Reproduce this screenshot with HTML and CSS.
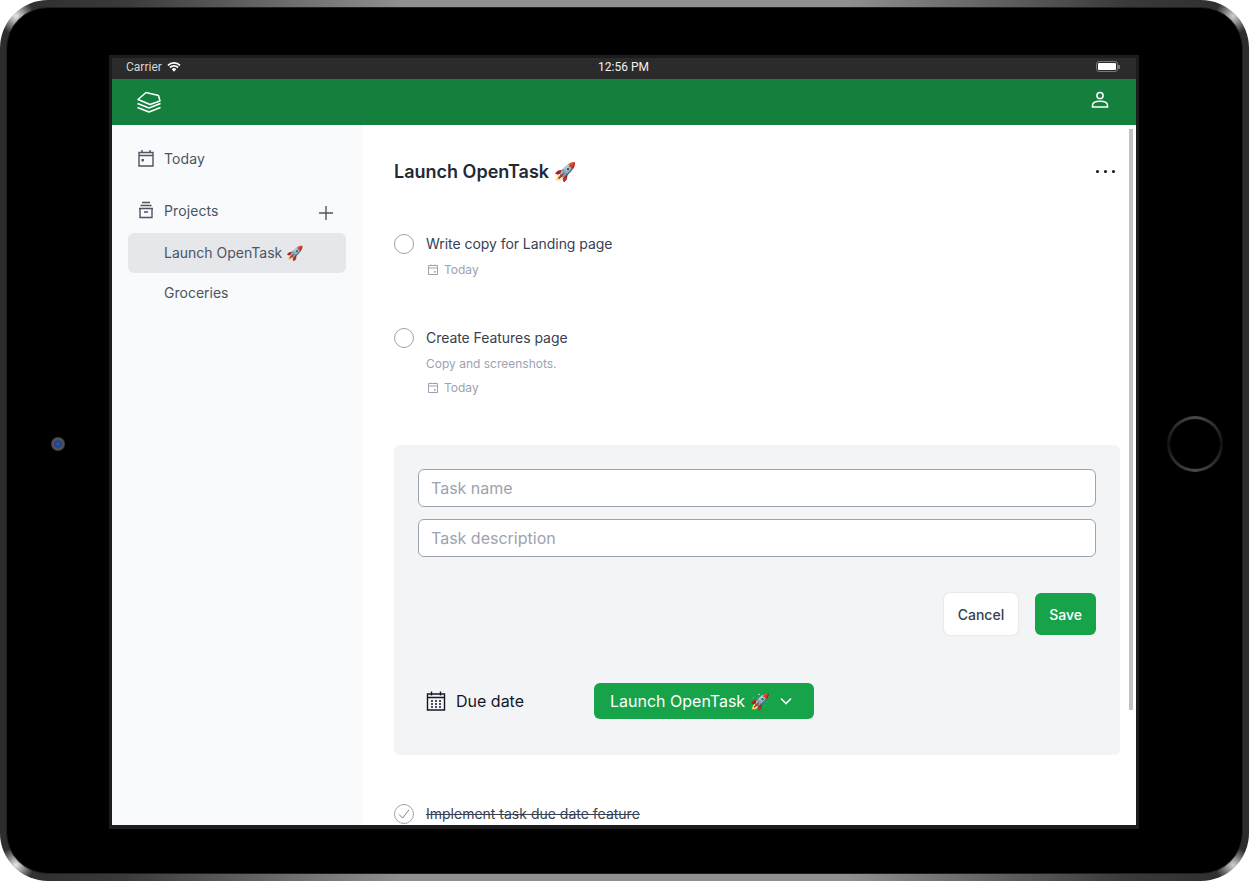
FILE: index.html
```html
<!DOCTYPE html>
<html lang="en">
<head>
  <meta charset="UTF-8">
  <title>OpenTask</title>
  <link rel="stylesheet" href="styles.css">
</head>
<body>
  <svg class="defs" width="0" height="0">
    <symbol id="cal-small" viewBox="0 0 12 12">
      <path d="M1.500 1.500h9v9h-9zM1.500 4h9M4 .5v1M8 .5v1" fill="none" stroke="currentColor" stroke-width="1"/>
      <rect x="7" y="7" width="1.600" height="1.600" fill="currentColor"/>
    </symbol>
  </svg>

  <div class="device">
    <div class="bezel">
      <span class="camera"></span>
      <span class="home-button"></span>

      <div class="screen">
        <div class="status-bar">
          <div class="status-left">
            <span>Carrier</span>
            <svg class="wifi" viewBox="0 0 14 10" width="14" height="10">
              <path d="M1 3.400a8.500 8.500 0 0 1 12 0M3 5.500a5.600 5.600 0 0 1 8 0" fill="none" stroke="#fff" stroke-width="1.800"/>
              <path d="M4.800 7.200a3 3 0 0 1 4.400 0L7 9.800z" fill="#fff"/>
            </svg>
          </div>
          <span class="status-time">12:56 PM</span>
          <div class="battery-wrap">
            <div class="battery"><span></span></div>
            <i class="battery-nub"></i>
          </div>
        </div>

        <header class="app-header">
          <svg class="logo" viewBox="0 0 26 22" width="26" height="22" fill="none" stroke="#fff" stroke-width="1.500" stroke-linejoin="round">
            <path d="M2 8.500 10 1.500l12.500 3 1.500 5.500-10 3.500z"/>
            <path d="M1.500 12.500l11.500 4.500 11.500-4.500"/>
            <path d="M1.500 16.500l11.500 4.500 11.500-4.500"/>
          </svg>
          <svg class="user" viewBox="0 0 18 18" width="18" height="18" fill="none" stroke="#fff" stroke-width="1.500">
            <circle cx="9" cy="4.600" r="3.100"/>
            <path d="M1.500 16v-1.500c0-2.800 2.800-4.200 7.500-4.200s7.500 1.400 7.500 4.200V16z"/>
          </svg>
        </header>

        <div class="app-body">
          <aside class="sidebar">
            <a class="nav-row nav-today">
              <svg viewBox="0 0 18 18" width="18" height="18" fill="none" stroke="currentColor" stroke-width="1.400">
                <path d="M2 3.500h14v13.500H2zM2 6.500h14M5 1v3M13 1v3"/>
                <rect x="4.500" y="10" width="2.400" height="2.400" fill="currentColor" stroke="none"/>
              </svg>
              <span>Today</span>
            </a>
            <div class="nav-row nav-projects">
              <svg viewBox="0 0 18 18" width="18" height="18" fill="none" stroke="currentColor" stroke-width="1.400">
                <path d="M5 1.500h8M3.500 4.500h11M2 7.500h14M3 7.500v9h12v-9M7 11h4"/>
              </svg>
              <span>Projects</span>
              <svg class="plus" viewBox="0 0 16 16" width="16" height="16" fill="none" stroke="currentColor" stroke-width="1.400">
                <path d="M8 1v14M1 8h14"/>
              </svg>
            </div>
            <a class="project-row is-active">Launch OpenTask 🚀</a>
            <a class="project-row">Groceries</a>
          </aside>

          <main class="content">
            <div class="title-row">
              <h1>Launch OpenTask 🚀</h1>
              <div class="dots"><i></i><i></i><i></i></div>
            </div>

            <div class="task">
              <span class="check"></span>
              <div>
                <p class="task-name">Write copy for Landing page</p>
                <p class="task-date"><svg width="12" height="12"><use href="#cal-small"/></svg>Today</p>
              </div>
            </div>

            <div class="task">
              <span class="check"></span>
              <div>
                <p class="task-name">Create Features page</p>
                <p class="task-desc">Copy and screenshots.</p>
                <p class="task-date"><svg width="12" height="12"><use href="#cal-small"/></svg>Today</p>
              </div>
            </div>

            <form class="task-form">
              <input class="field" type="text" placeholder="Task name">
              <input class="field" type="text" placeholder="Task description">
              <div class="form-actions">
                <button class="btn btn-cancel" type="button">Cancel</button>
                <button class="btn btn-save" type="button">Save</button>
              </div>
              <div class="form-meta">
                <div class="due-date">
                  <svg viewBox="0 0 20 20" width="20" height="20" fill="none" stroke="#111827" stroke-width="1.400">
                    <path d="M1.500 3h17v16h-17zM1.500 6.500h17M5.500 .5v4M14.500 .5v4"/>
                    <path d="M5 10h2M9 10h2M13 10h2M5 13h2M9 13h2M13 13h2M5 16h2M9 16h2M13 16h2" stroke-width="1.300"/>
                  </svg>
                  <span>Due date</span>
                </div>
                <button class="project-select" type="button">
                  Launch OpenTask 🚀
                  <svg viewBox="0 0 12 8" width="12" height="8" fill="none" stroke="#fff" stroke-width="1.600">
                    <path d="M1 1.500l5 5 5-5"/>
                  </svg>
                </button>
              </div>
            </form>

            <div class="task task-done">
              <span class="check">
                <svg viewBox="0 0 20 20" width="18" height="18" fill="none" stroke="#6b7280" stroke-width="1">
                  <path d="M4.500 10.500l4 4 7-9"/>
                </svg>
              </span>
              <p class="task-name">Implement task due date feature</p>
            </div>

            <span class="scrollbar"></span>
          </main>
        </div>
      </div>
    </div>
  </div>
</body>
</html>
```

FILE: styles.css
```css
* {
  box-sizing: border-box;
}

html, body {
  margin: 0;
  padding: 0;
  background: #fff;
}

body {
  font-family: Inter, "Liberation Sans", sans-serif;
  width: 1249px;
  height: 881px;
  overflow: hidden;
}

p, h1 {
  margin: 0;
}

.defs {
  position: absolute;
}

/* device frame */
.device {
  width: 1249px;
  height: 881px;
  padding: 7px 6px;
  border-radius: 48px;
  background:
    radial-gradient(circle at 16px 16px, #e8e8e8 0, rgba(232, 232, 232, 0) 18px),
    radial-gradient(circle at 1233px 16px, #cfcfcf 0, rgba(207, 207, 207, 0) 18px),
    radial-gradient(circle at 16px 865px, #e8e8e8 0, rgba(232, 232, 232, 0) 18px),
    radial-gradient(circle at 1233px 865px, #cfcfcf 0, rgba(207, 207, 207, 0) 18px),
    linear-gradient(90deg, #2c2c2e, #3a3a3c 10%, #8f8f92 32%, #8f8f92 68%, #3a3a3c 90%, #2c2c2e);
}

.bezel {
  position: relative;
  height: 100%;
  padding: 47px 0 0 102px;
  border: 1px solid #1f1f21;
  border-radius: 42px;
  background: #000;
}

.camera {
  position: absolute;
  left: 44px;
  top: 429px;
  width: 14px;
  height: 14px;
  border-radius: 50%;
  background: radial-gradient(circle, #2a5fc4 0, #1d3f8a 30%, #555 48%, #3a3a3a 75%, #0a0a0a 100%);
}

.home-button {
  position: absolute;
  left: 1160px;
  top: 408px;
  width: 56px;
  height: 56px;
  border-radius: 50%;
  background: conic-gradient(#4a4a4a, #111 25%, #4a4a4a 50%, #111 75%, #4a4a4a);
}

.home-button::after {
  content: "";
  display: block;
  width: 50px;
  height: 50px;
  margin: 3px;
  border-radius: 50%;
  background: #000;
}

/* screen */
.screen {
  width: 1030px;
  height: 774px;
  border: solid #1c1c1e;
  border-width: 3px 3px 4px;
  display: flex;
  flex-direction: column;
  background: #fff;
}

.status-bar {
  height: 21px;
  flex: none;
  display: flex;
  align-items: center;
  justify-content: space-between;
  padding: 0 16px 4px 14px;
  background: #2b2b2b;
  color: #d6d6d6;
  font-family: Roboto, sans-serif;
  font-size: 12px;
}

.status-left {
  display: flex;
  align-items: center;
  gap: 5px;
  width: 100px;
}

.status-time {
  color: #f2f2f2;
}

.battery-wrap {
  display: flex;
  align-items: center;
  margin-left: 75px;
}

.battery {
  width: 22px;
  height: 11px;
  padding: 1px;
  border: 1px solid #777;
  border-radius: 3px;
}

.battery span {
  display: block;
  height: 100%;
  background: #fff;
  border-radius: 1px;
}

.battery-nub {
  width: 2px;
  height: 4px;
  background: #777;
}

.app-header {
  height: 46px;
  flex: none;
  display: flex;
  align-items: center;
  justify-content: space-between;
  padding: 0 27px 4px 24px;
  background: #15803d;
}

.logo {
  margin-top: 3px;
}

.app-body {
  flex: 1;
  display: flex;
  min-height: 0;
}

/* sidebar */
.sidebar {
  width: 250px;
  flex: none;
  padding: 23px 16px 0;
  background: #f9fafb;
  color: #4b5563;
  font-size: 14px;
}

.nav-row {
  display: flex;
  align-items: center;
  gap: 9px;
  height: 20px;
  padding-left: 9px;
  letter-spacing: .1px;
}

.nav-projects {
  margin-top: 32px;
  margin-bottom: 13px;
}

.plus {
  margin-left: auto;
  margin-right: 12px;
  margin-top: 5px;
}

.project-row {
  display: flex;
  align-items: center;
  height: 40px;
  padding: 0 0 1px 36px;
  border-radius: 6px;
}

.is-active {
  background: #e5e7eb;
}

/* task list */
.content {
  position: relative;
  flex: 1;
  padding: 30px 16px 0 32px;
  overflow: hidden;
  color: #374151;
  font-size: 14px;
}

.title-row {
  display: flex;
  align-items: center;
  justify-content: space-between;
  height: 32px;
  padding-right: 5px;
}

h1 {
  font-size: 18px;
  font-weight: 600;
  color: #1f2937;
}

.dots {
  display: flex;
  gap: 5px;
}

.dots i {
  width: 3px;
  height: 3px;
  border-radius: 50%;
  background: #111;
}

.task {
  display: flex;
  gap: 12px;
  margin-top: 47px;
}

.task + .task {
  margin-top: 50px;
}

.check {
  width: 20px;
  height: 20px;
  flex: none;
  border: 1px solid #9ca3af;
  border-radius: 50%;
}

.task-name {
  line-height: 20px;
  letter-spacing: -.05px;
}

.task-desc {
  margin-top: 8px;
  font-size: 12px;
  line-height: 16px;
  color: #9ca3af;
}

.task-date {
  display: flex;
  align-items: center;
  gap: 5px;
  margin-top: 8px;
  padding-left: 1px;
  font-size: 12px;
  line-height: 16px;
  color: #9ca3af;
}

/* add task form */
.task-form {
  margin-top: 49px;
  height: 310px;
  padding: 24px;
  background: #f3f4f6;
  border-radius: 6px;
}

.field {
  display: block;
  width: 100%;
  height: 38px;
  margin-bottom: 12px;
  padding: 0 12px;
  border: 1px solid #9ca3af;
  border-radius: 6px;
  background: #fff;
  font-family: inherit;
  font-size: 16px;
}

.field::placeholder {
  color: #9ca3af;
}

.form-actions {
  display: flex;
  justify-content: flex-end;
  gap: 17px;
  margin-top: 36px;
}

.btn {
  height: 42px;
  padding: 0 14px;
  border: 0;
  border-radius: 6px;
  font-family: inherit;
  font-size: 14px;
  font-weight: 500;
}

.btn-cancel {
  background: #fff;
  color: #374151;
  box-shadow: 0 0 2px rgba(0, 0, 0, .15);
}

.btn-save {
  background: #16a34a;
  color: #fff;
}

.form-meta {
  display: flex;
  align-items: center;
  margin-top: 48px;
  padding-left: 8px;
}

.due-date {
  display: flex;
  align-items: center;
  gap: 10px;
  width: 168px;
  font-size: 16px;
  color: #111827;
}

.project-select {
  display: flex;
  align-items: center;
  gap: 10px;
  height: 36px;
  padding: 0 22px 0 16px;
  border: 0;
  border-radius: 6px;
  background: #16a34a;
  color: #fff;
  font-family: inherit;
  font-size: 16px;
}

.task.task-done {
  margin-top: 49px;
  color: #374151;
}

.task-done .check {
  display: flex;
  align-items: center;
  justify-content: center;
}

.task-done .task-name {
  text-decoration: line-through;
  letter-spacing: 0;
}

.scrollbar {
  position: absolute;
  right: 3px;
  top: 4px;
  width: 4px;
  height: 581px;
  background: #c1c1c1;
}
```
